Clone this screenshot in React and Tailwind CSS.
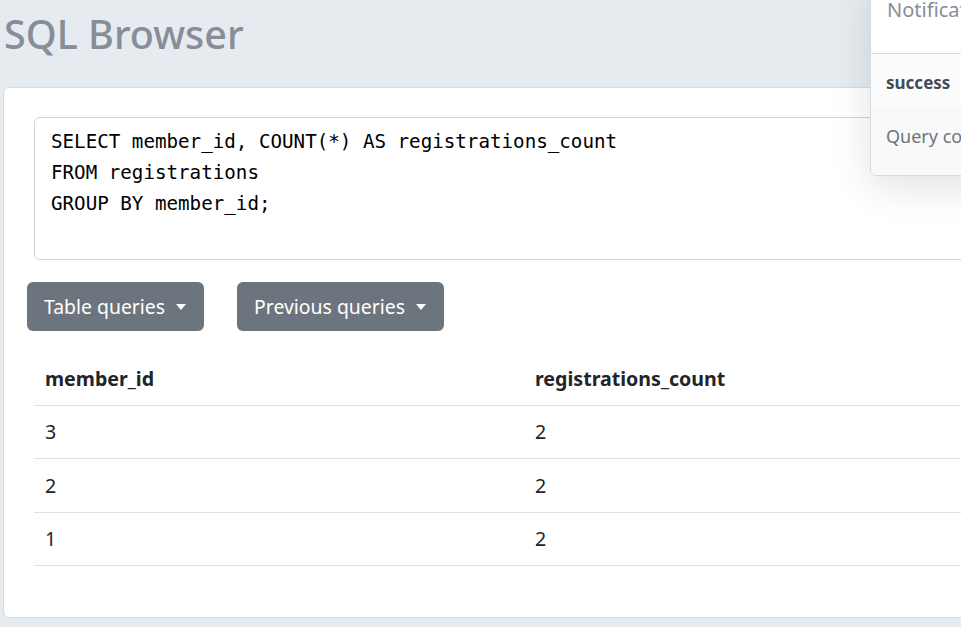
import { useState } from "react";

const rows = [
  { member_id: 3, registrations_count: 2 },
  { member_id: 2, registrations_count: 2 },
  { member_id: 1, registrations_count: 2 },
];

function DropButton({ label }) {
  return (
    <button
      type="button"
      className="flex h-[49px] items-center rounded-[6px] bg-[#6c757d] pr-[18px] pl-[17px] text-[19.4px] text-white"
    >
      {label}
      <span className="ml-[11px] h-0 w-0 border-x-[5px] border-t-[6px] border-x-transparent border-t-white" />
    </button>
  );
}

export default function App() {
  const [query, setQuery] = useState(
    "SELECT member_id, COUNT(*) AS registrations_count\nFROM registrations\nGROUP BY member_id;"
  );

  return (
    <div
      className="relative h-[627px] w-[961px] overflow-hidden bg-[#e5ebef] text-[#212529]"
      style={{ fontFamily: '"Noto Sans", "Open Sans", sans-serif' }}
    >
      <h1 className="ml-[4px] pt-[4px] text-[39.5px] leading-[60px] font-medium text-[#878d99]">
        SQL Browser
      </h1>

      <div className="mt-[23px] ml-[3px] h-[531px] w-[1100px] rounded-[6px] border border-[#d3dbe3] bg-white pt-[29px] pl-[30px]">
        <textarea
          value={query}
          onChange={(e) => setQuery(e.target.value)}
          spellCheck={false}
          className="block h-[143px] w-[1000px] resize-none rounded-[6px] border border-[#ced4da] pt-[8px] pl-[16px] text-[19.2px] leading-[31px] text-black outline-none"
          style={{ fontFamily: '"DejaVu Sans Mono", "Liberation Mono", monospace' }}
        />

        <div className="mt-[22px] ml-[-7px] flex gap-[33px]">
          <DropButton label="Table queries" />
          <DropButton label="Previous queries" />
        </div>

        <table className="mt-[21px] w-[980px] table-fixed border-collapse text-[19.6px]">
          <thead>
            <tr className="h-[53px] border-b border-[#dee2e6]">
              <th className="px-[11px] text-left font-bold">member_id</th>
              <th className="px-[11px] text-left font-bold">registrations_count</th>
            </tr>
          </thead>
          <tbody>
            {rows.map((r) => (
              <tr key={r.member_id} className="h-[53.5px] border-b border-[#dee2e6]">
                <td className="px-[11px]">{r.member_id}</td>
                <td className="px-[11px]">{r.registrations_count}</td>
              </tr>
            ))}
          </tbody>
        </table>
      </div>

      <div className="absolute top-[-16px] left-[870px] w-[320px] overflow-hidden rounded-[6px] border border-[#d3dbe3] bg-white shadow-[0_10px_40px_rgba(0,0,0,0.12)]">
        <div className="h-[68px] px-[16px] pt-[11px] text-[20px] leading-[28px] text-[#878d99]">
          Notifications
        </div>
        <div className="flex h-[53px] items-start border-t border-[#d3dbe3] bg-[#fcfcfd] px-[15px] pt-[16px] text-[17px] font-bold text-[#3f4b58]">
          success
        </div>
        <div className="h-[69px] bg-[#f9f9fa] px-[15px] pt-[17px] text-[18px] text-[#6c757d]">
          Query completed successfully
        </div>
      </div>
    </div>
  );
}
